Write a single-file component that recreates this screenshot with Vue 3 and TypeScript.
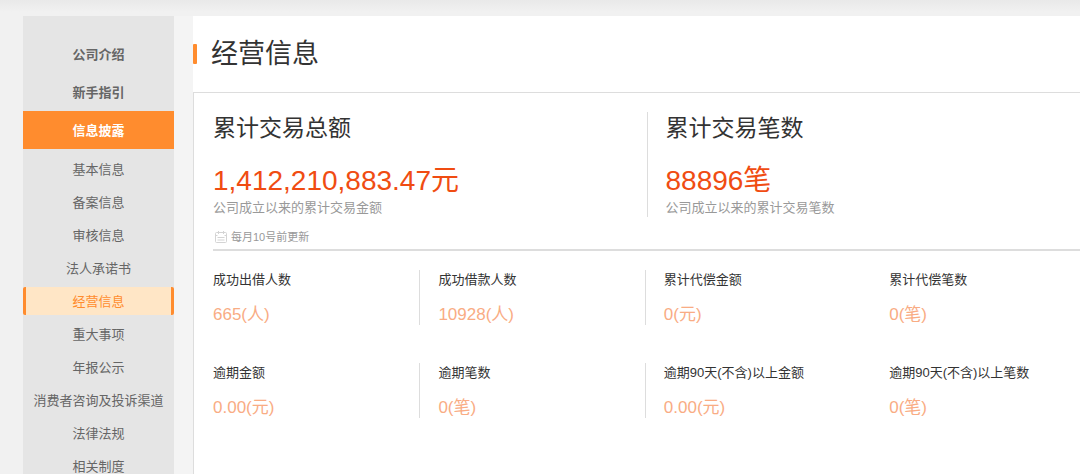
<script setup lang="ts">
interface MenuItem {
  label: string
  active?: boolean
}

interface Total {
  title: string
  value: string
  caption: string
}

interface Metric {
  label: string
  value: string
}

const sections: MenuItem[] = [
  { label: '公司介绍' },
  { label: '新手指引' },
  { label: '信息披露', active: true },
]

const pages: MenuItem[] = [
  { label: '基本信息' },
  { label: '备案信息' },
  { label: '审核信息' },
  { label: '法人承诺书' },
  { label: '经营信息', active: true },
  { label: '重大事项' },
  { label: '年报公示' },
  { label: '消费者咨询及投诉渠道' },
  { label: '法律法规' },
  { label: '相关制度' },
]

const totals: Total[] = [
  { title: '累计交易总额', value: '1,412,210,883.47元', caption: '公司成立以来的累计交易金额' },
  { title: '累计交易笔数', value: '88896笔', caption: '公司成立以来的累计交易笔数' },
]

const metrics: Metric[] = [
  { label: '成功出借人数', value: '665(人)' },
  { label: '成功借款人数', value: '10928(人)' },
  { label: '累计代偿金额', value: '0(元)' },
  { label: '累计代偿笔数', value: '0(笔)' },
  { label: '逾期金额', value: '0.00(元)' },
  { label: '逾期笔数', value: '0(笔)' },
  { label: '逾期90天(不含)以上金额', value: '0.00(元)' },
  { label: '逾期90天(不含)以上笔数', value: '0(笔)' },
]
</script>

<template>
  <div class="page">
    <nav class="sidebar" aria-label="信息披露">
      <ul class="sections">
        <li v-for="item in sections" :key="item.label">
          <a href="#" class="section" :class="{ active: item.active }">{{ item.label }}</a>
        </li>
      </ul>
      <ul class="subpages">
        <li v-for="item in pages" :key="item.label">
          <a href="#" class="subpage" :class="{ active: item.active }">{{ item.label }}</a>
        </li>
      </ul>
    </nav>
    <div class="gutter"></div>
    <main class="main">
      <header class="header">
        <span class="accent"></span>
        <h1>经营信息</h1>
      </header>
      <div class="panel">
        <section class="totals">
          <div v-for="total in totals" :key="total.title" class="total">
            <h2>{{ total.title }}</h2>
            <p class="amount">{{ total.value }}</p>
            <p class="caption">{{ total.caption }}</p>
          </div>
        </section>
        <p class="update">
          <svg width="12" height="12" viewBox="0 0 12 12" fill="none" stroke="#d4d4d4" aria-hidden="true">
            <rect x="0.5" y="1.5" width="11" height="10" rx="1" />
            <path d="M3.5 0v3M8.5 0v3M0.5 4.5h2M9.5 4.5h2M2.5 6.5h7M2.5 9h7" />
          </svg>
          <span>每月10号前更新</span>
        </p>
        <dl class="metrics">
          <div v-for="metric in metrics" :key="metric.label" class="metric">
            <dt>{{ metric.label }}</dt>
            <dd>{{ metric.value }}</dd>
          </div>
        </dl>
      </div>
    </main>
  </div>
</template>

<style>
body {
  margin: 0;
  background: #f1f1f1;
}
</style>

<style scoped>
.page {
  display: flex;
  box-sizing: border-box;
  min-height: 100vh;
  padding: 16px 0 0 23px;
  background: linear-gradient(#e9e9e9, #f1f1f1 12px);
  font-family: "Liberation Sans", "Noto Sans CJK SC", sans-serif;
  font-size: 13px;
  color: #333;
}

ul,
dl,
dd,
p,
h1,
h2 {
  margin: 0;
  padding: 0;
  font-weight: 400;
}

ul {
  list-style: none;
}

.sidebar {
  flex: none;
  box-sizing: border-box;
  width: 151px;
  padding-top: 19px;
  background: #e5e5e5;
}

.section,
.subpage {
  display: block;
  padding-top: 2px;
  text-align: center;
  text-decoration: none;
  white-space: nowrap;
  color: #666;
}

.section {
  line-height: 36px;
  font-weight: 700;
}

.section.active {
  background: #ff8c2e;
  color: #fff;
}

.subpages {
  display: flex;
  flex-direction: column;
  gap: 5px;
  padding-top: 6px;
}

.subpage {
  line-height: 26px;
  border: solid transparent;
  border-width: 0 3px;
}

.subpage.active {
  border-color: #ff8c2e;
  border-radius: 2px;
  background: #ffe6c6;
  color: #ff8c2e;
}

.gutter {
  flex: none;
  width: 19px;
  background: #f4f4f4;
}

.main {
  display: flex;
  flex-direction: column;
  flex: 1;
  min-width: 0;
  background: #fff;
}

.header {
  display: flex;
  align-items: center;
  gap: 14px;
  height: 76px;
}

.accent {
  width: 4px;
  height: 20px;
  border-radius: 1px;
  background: #ff8c2e;
}

h1 {
  font-size: 27px;
  line-height: 40px;
}

.panel {
  flex: 1;
  padding: 19px 0 0 19px;
  border-top: 1px solid #ddd;
  border-left: 1px solid #ddd;
}

.totals {
  display: grid;
  grid-template-columns: 1fr 1fr;
}

.total + .total {
  padding-left: 18px;
  border-left: 1px solid #ddd;
}

h2 {
  font-size: 23px;
  line-height: 32px;
}

.amount {
  margin-top: 19px;
  font-size: 28px;
  line-height: 36px;
  color: #f04c12;
}

.caption {
  line-height: 18px;
  color: #999;
}

.update {
  display: flex;
  align-items: center;
  gap: 4px;
  margin-top: 12px;
  padding: 0 0 4px 2px;
  border-bottom: 2px solid #ddd;
  font-size: 11px;
  line-height: 16px;
  color: #999;
}

.metrics {
  display: grid;
  grid-template-columns: 26% 26% 26% 22%;
  row-gap: 38px;
  padding: 19px 0;
}

.metric {
  margin-right: 18px;
  border-right: 1px solid #ddd;
  white-space: nowrap;
}

.metric:nth-child(4n),
.metric:nth-child(4n + 3) {
  border-right-color: transparent;
}

dt {
  line-height: 20px;
}

dd {
  margin-top: 15px;
  font-size: 17px;
  line-height: 20px;
  color: #f9ac84;
}
</style>
